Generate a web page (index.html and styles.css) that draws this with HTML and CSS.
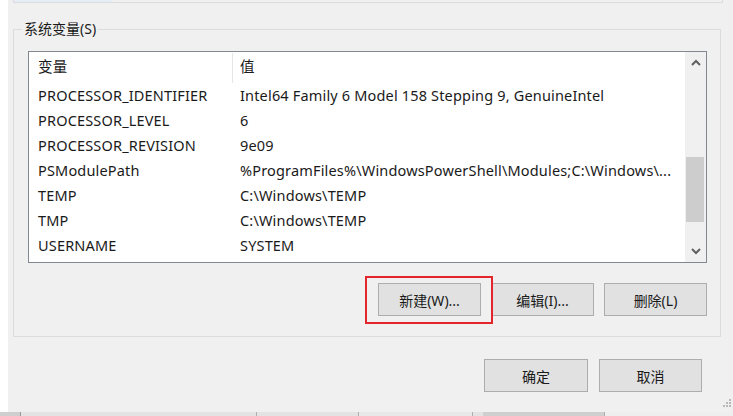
FILE: index.html
```html
<!DOCTYPE html>
<html lang="zh-CN">
<head>
<meta charset="utf-8">
<title>环境变量</title>
<link rel="stylesheet" href="styles.css">
</head>
<body>
<div class="screen">
  <div class="edge"></div>
  <div class="dialog">
    <div class="prev-group"><div class="prev-sel"></div></div>
    <div class="group">
      <span class="group-title">系统变量(S)</span>
      <div class="list">
        <div class="list-body">
          <div class="list-head">
            <div class="c1">变量</div>
            <div class="c2">值</div>
          </div>
          <div class="row"><div class="c1">PROCESSOR_IDENTIFIER</div><div class="c2">Intel64 Family 6 Model 158 Stepping 9, GenuineIntel</div></div>
          <div class="row"><div class="c1">PROCESSOR_LEVEL</div><div class="c2">6</div></div>
          <div class="row"><div class="c1">PROCESSOR_REVISION</div><div class="c2">9e09</div></div>
          <div class="row"><div class="c1">PSModulePath</div><div class="c2">%ProgramFiles%\WindowsPowerShell\Modules;C:\Windows\...</div></div>
          <div class="row"><div class="c1">TEMP</div><div class="c2">C:\Windows\TEMP</div></div>
          <div class="row"><div class="c1">TMP</div><div class="c2">C:\Windows\TEMP</div></div>
          <div class="row"><div class="c1">USERNAME</div><div class="c2">SYSTEM</div></div>
        </div>
        <div class="scrollbar">
          <div class="sb-arrow">
            <svg width="10" height="7" viewBox="0 0 10 7"><path d="M1 6 L5 2 L9 6" fill="none" stroke="#606060" stroke-width="2"/></svg>
          </div>
          <div class="sb-gap-top"></div>
          <div class="sb-thumb"></div>
          <div class="sb-gap"></div>
          <div class="sb-arrow">
            <svg width="10" height="7" viewBox="0 0 10 7"><path d="M1 1 L5 5 L9 1" fill="none" stroke="#606060" stroke-width="2"/></svg>
          </div>
        </div>
      </div>
      <div class="actions">
        <div class="marked"><button class="btn">新建(W)...</button></div>
        <button class="btn">编辑(I)...</button>
        <button class="btn">删除(L)</button>
      </div>
    </div>
    <div class="footer">
      <button class="btn btn-ok">确定</button>
      <button class="btn">取消</button>
    </div>
    <svg class="grip" width="10" height="12" viewBox="0 0 10 12">
      <rect x="7" y="1" width="2" height="2" fill="#b8b8b8"/>
      <rect x="4" y="4" width="2" height="2" fill="#b8b8b8"/>
      <rect x="7" y="4" width="2" height="2" fill="#b8b8b8"/>
      <rect x="1" y="7" width="2" height="2" fill="#b8b8b8"/>
      <rect x="4" y="7" width="2" height="2" fill="#b8b8b8"/>
      <rect x="7" y="7" width="2" height="2" fill="#b8b8b8"/>
    </svg>
  </div>
</div>
<div class="under">
  <div class="u u1"></div>
  <div class="u u2"></div>
  <div class="u u3"></div>
  <div class="u u4"></div>
  <div class="u u5"></div>
  <div class="u u6"></div>
  <div class="u u7"></div>
</div>
</body>
</html>
```

FILE: styles.css
```css
html, body {
  margin: 0;
  padding: 0;
  background: #ffffff;
}
body {
  width: 733px;
  height: 416px;
  overflow: hidden;
  font-family: "Noto Sans", "Noto Sans CJK SC", sans-serif;
  font-size: 14px;
  color: #1a1a1a;
}
.screen {
  display: flex;
  height: 412px;
}
.edge {
  width: 8px;
  flex: none;
  background: #ffffff;
}
.dialog {
  position: relative;
  flex: 1;
  background: #f0f0f0;
  display: flex;
  flex-direction: column;
}
.prev-group {
  height: 2px;
  margin-left: 5px;
  width: 708px;
  border: 1px solid #dcdcdc;
  border-top: none;
  display: flex;
}
.prev-sel {
  width: 99px;
  background: #e6edf6;
}
.group {
  position: relative;
  margin-top: 26px;
  margin-left: 5px;
  width: 708px;
  border: 1px solid #dcdcdc;
  padding: 21px 13px 20px 14px;
  box-sizing: border-box;
  height: 308px;
}
.group-title {
  position: absolute;
  top: -11px;
  left: 8px;
  padding: 0 2px;
  background: #f0f0f0;
  line-height: 20px;
}
.list {
  height: 212px;
  box-sizing: border-box;
  border: 1px solid #828790;
  background: #ffffff;
  display: flex;
  font-size: 14.5px;
  letter-spacing: 0.17px;
}
.list-body {
  flex: 1;
  overflow: hidden;
}
.list-head {
  display: flex;
  height: 31px;
  align-items: center;
  line-height: 20px;
}
.list-head .c1 {
  align-self: stretch;
  display: flex;
  align-items: center;
  border-right: 1px solid #e5e5e5;
  margin: 1px 0 0;
  padding-bottom: 4px;
}
.c1 {
  width: 194px;
  padding-left: 9px;
  flex: none;
}
.c2 {
  padding-left: 8px;
  white-space: nowrap;
}
.list-head .c2 {
  padding-left: 7px;
  padding-bottom: 3px;
}
.row {
  display: flex;
  height: 25px;
  align-items: center;
  white-space: nowrap;
  line-height: 20px;
  padding-bottom: 2px;
  box-sizing: border-box;
}
.scrollbar {
  width: 21px;
  flex: none;
  background: #f0f0f0;
  display: flex;
  flex-direction: column;
}
.sb-arrow {
  height: 21px;
  display: flex;
  align-items: center;
  justify-content: center;
}
.sb-gap-top {
  height: 84px;
}
.sb-thumb {
  height: 65px;
  margin: 0 2px 0 1px;
  background: #cdcdcd;
}
.sb-gap {
  flex: 1;
}
.actions {
  display: flex;
  justify-content: flex-end;
  gap: 10px;
  margin-top: 20px;
}
.btn {
  width: 103px;
  height: 33px;
  box-sizing: border-box;
  border: 1px solid #adadad;
  background: #e1e1e1;
  font-family: "Noto Sans", "Noto Sans CJK SC", sans-serif;
  font-size: 14px;
  color: #1a1a1a;
  padding: 0;
  margin: 0;
}
.marked {
  position: relative;
  display: flex;
}
.marked::after {
  content: "";
  position: absolute;
  top: -7px;
  bottom: -8px;
  left: -13px;
  right: -12px;
  border: 2px solid #e3262b;
}
.footer {
  display: flex;
  justify-content: flex-end;
  gap: 11px;
  margin-top: 22px;
  padding-right: 31px;
}
.btn-ok {
  width: 104px;
}
.grip {
  position: absolute;
  right: 1px;
  bottom: 2px;
}
.under {
  display: flex;
  height: 4px;
  background: #dcdcdc;
}
.u {
  height: 4px;
  box-sizing: border-box;
}
.u1 { width: 21px; background: #cfcfcf; border-right: 1px solid #9a9a9a; }
.u2 { width: 236px; background: #e3e3e3; border-right: 1px solid #b0b0b0; }
.u3 { width: 102px; background: #e3e3e3; border-right: 1px solid #b0b0b0; }
.u4 { width: 114px; background: #e8e8e8; border-right: 1px solid #b0b0b0; }
.u5 { width: 10px; background: #e3e3e3; }
.u6 { width: 122px; background: #cfcfcf; border-right: 1px solid #b0b0b0; }
.u7 { flex: 1; background: #eeeeee; }
```
